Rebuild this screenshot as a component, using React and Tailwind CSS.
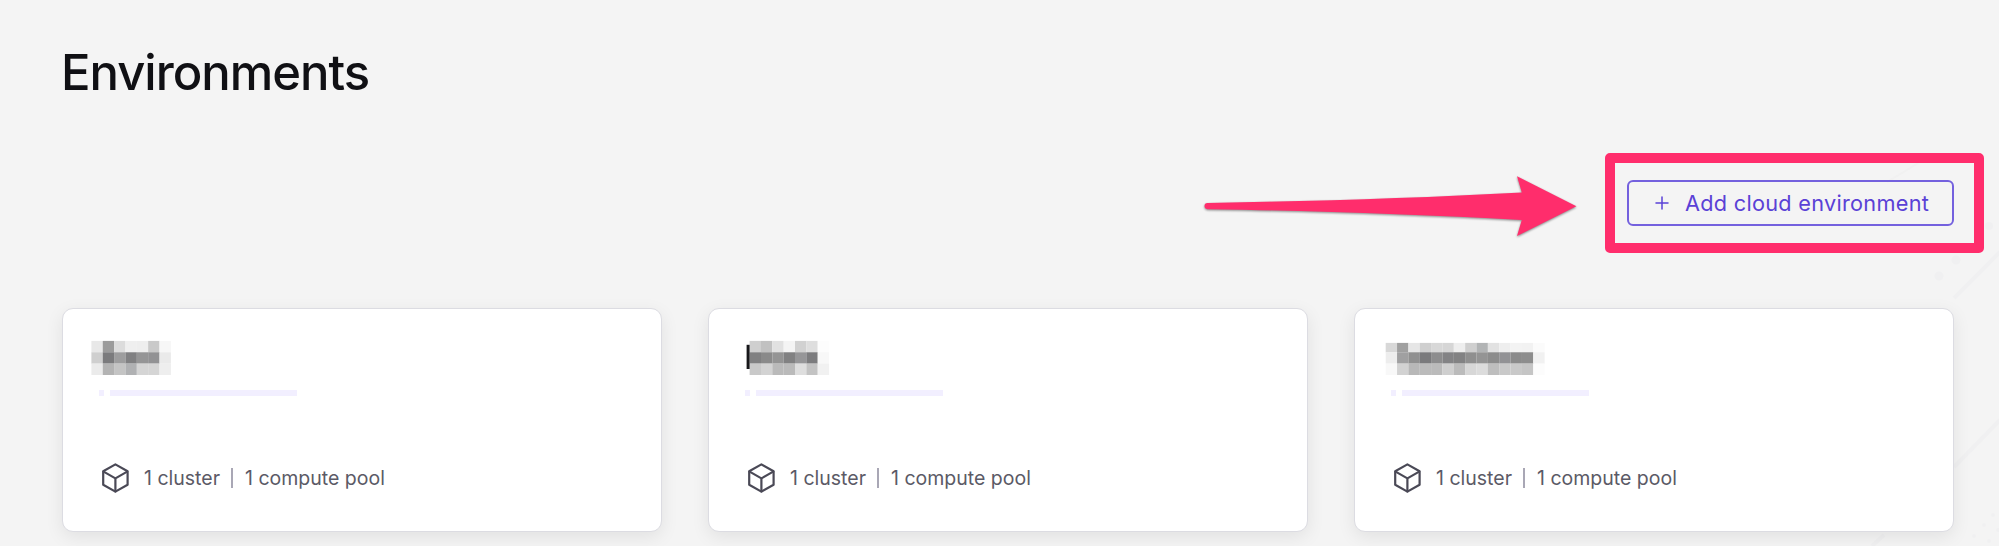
const environments = [
  {
    left: 28.4,
    rows: [
      ['#e8e8e8', '#9b9b9b', '#dcdcdc', '#efefef', '#eeeeee', '#c9c9c9', '#f7f7f7'],
      ['#cfcfcf', '#7b7b7d', '#9d9d9e', '#808082', '#959596', '#929294', '#eaeaea'],
      ['#ebebeb', '#b3b3b3', '#c4c4c4', '#b0b1b3', '#d5d5d5', '#d5d5d5', '#eeeeee'],
    ],
    caret: false,
    firstRowTop: 0,
  },
  {
    left: 40.6,
    rows: [
      ['#cfcfcf', '#c1c1c1', '#e1e1e1', '#f4f4f4', '#d1d1d1', '#dedede', '#fdfdfd'],
      ['#808081', '#8a8a8a', '#949494', '#818182', '#969698', '#7c7c7e', '#f8f8f8'],
      ['#c9c9c9', '#d3d3d3', '#bababa', '#bababa', '#dedede', '#c3c3c3', '#f1f1f1'],
    ],
    caret: true,
    firstRowTop: 0,
  },
  {
    left: 30.7,
    rows: [
      ['#d8d8d8', '#a0a0a0', '#e6e6e6', '#cfcfcf', '#d8d8d8', '#d6d6d6', '#eeeeee', '#cfcfcf', '#b2b4b5', '#e2e2e2', '#eeeeee', '#f3f3f3', '#f2f2f2', '#fbfbfb'],
      ['#ededed', '#a0a0a1', '#909090', '#7a7a7c', '#8d8d8e', '#838385', '#828283', '#8f8f8f', '#949494', '#8c8c8c', '#929295', '#8b8b8b', '#8d8d8d', '#f1f1f1'],
      ['#f8f8f8', '#d2d2d2', '#b8b8b8', '#bbbbbb', '#bbbbbb', '#cfcfcf', '#bbbbbb', '#d7d7d7', '#dcdcdc', '#bebebe', '#c9c9c9', '#c9c9c9', '#c5c5c5', '#fcfcfc'],
    ],
    caret: false,
    firstRowTop: 2,
  },
];

function RedactedName({ left, rows, caret, firstRowTop }) {
  const cell = 11.35;
  return (
    <svg className="block h-[36px] w-full" aria-hidden="true">
      {rows.map((row, r) =>
        row.map((fill, c) => {
          const trim = r === 0 ? firstRowTop : 0;
          return (
            <rect
              key={`${r}-${c}`}
              x={left + c * cell}
              y={0.9 + r * cell + trim}
              width={cell + 0.05}
              height={cell + 0.05 - trim}
              fill={fill}
            />
          );
        })
      )}
      {caret && <rect x="37.6" y="4.8" width="3" height="24.2" fill="#17171a" />}
    </svg>
  );
}

function CubeIcon() {
  return (
    <svg
      viewBox="0 0 28 32"
      className="h-8 w-7 shrink-0"
      fill="none"
      stroke="#4a4956"
      strokeWidth="2.2"
      strokeLinejoin="round"
      strokeLinecap="round"
    >
      <path d="M14.4 2.4 26.6 9.3v13.4L14.4 29.6 2.2 22.7V9.3Z" />
      <path d="M2.6 9.6 14.4 16.4l11.8-6.8M14.4 16.4v13" />
    </svg>
  );
}

function EnvironmentCard({ env }) {
  return (
    <article className="flex h-[224px] flex-col rounded-[11px] border border-[#dcdce2] bg-white pt-[31px] shadow-[0_5px_18px_rgba(0,0,0,0.08)]">
      <RedactedName {...env} />
      <div className="mt-[14px] flex h-[6px] gap-[6px] pl-[36px]">
        <span className="w-[5px] bg-[#f2efff]" />
        <span className="w-[187px] bg-[#f2efff]" />
      </div>
      <div className="mt-[66px] flex h-8 items-center pl-[38px] text-[19.5px] leading-8 text-[#5b5a66]">
        <CubeIcon />
        <span className="ml-[15px] w-[87px] whitespace-nowrap">1 cluster</span>
        <span className="h-5 w-[2px] bg-[#a9a7b5]" />
        <span className="ml-[12px] whitespace-nowrap">1 compute pool</span>
      </div>
    </article>
  );
}

function Backdrop() {
  return (
    <svg className="pointer-events-none absolute inset-0 h-full w-full" viewBox="0 0 1999 546" fill="none" aria-hidden="true">
      <g stroke="#f0f0f1" strokeWidth="4">
        <path d="M1954 298 2000 252" />
        <path d="M1954 467 2000 420" />
        <path d="M1872 546 1884 535" />
        <path d="M1887 182 1930 156" strokeWidth="2" stroke="#f1f1f1" />
      </g>
      <g fill="#f0f0f1">
        <circle cx="1956" cy="260" r="4.5" />
        <circle cx="1939" cy="276" r="4.5" />
        <circle cx="1989" cy="226" r="4" />
        <circle cx="1993" cy="515" r="2" />
        <circle cx="1984" cy="525" r="2" />
        <circle cx="1974" cy="536" r="2" />
        <circle cx="1989" cy="541" r="2" />
        <circle cx="1998" cy="530" r="2" />
      </g>
    </svg>
  );
}

function Arrow() {
  return (
    <svg
      viewBox="0 0 400 90"
      className="mr-[15px] h-[90px] w-[400px] shrink-0"
      style={{ filter: 'drop-shadow(0 1px 1px rgba(0,0,0,0.45))' }}
    >
      <path
        d="M17.5 43 C130 41 230 38 331.8 32.5 L327 16.3 386.4 46.3 327 76 331.8 60 C230 54.5 130 51 17.5 49.2 Q14.5 49 14.5 46.1 Q14.5 43.1 17.5 43Z"
        fill="#ff2d6c"
      />
    </svg>
  );
}

export default function App() {
  return (
    <main className="relative h-[546px] w-[1999px] overflow-hidden bg-[#f4f4f4] font-['Inter',sans-serif]">
      <Backdrop />
      <div className="relative flex flex-col">
        <h1 className="h-[153px] pl-[61px] pt-[43px] text-[49px] font-medium leading-[60px] tracking-[-1.02px] text-[#101014]">
          Environments
        </h1>
        <div className="flex h-[100px] justify-end pr-[15px]">
          <div className="pt-[7px]">
            <Arrow />
          </div>
          <div className="flex h-[100px] w-[379px] items-center rounded-[5px] border-[10px] border-[#ff2d6c] pl-[12px]">
            <button className="flex h-[46px] w-[327px] items-center whitespace-nowrap rounded-[6px] border-2 border-[#7461de] pl-[26px] text-[21.7px] leading-[28px] tracking-[0.28px] text-[#5a41d6]">
              <svg viewBox="0 0 14 14" className="mr-[16px] h-[14px] w-[14px]" stroke="currentColor" strokeWidth="1.5" strokeLinecap="round">
                <path d="M7 1v12M1 7h12" />
              </svg>
              Add cloud environment
            </button>
          </div>
        </div>
        <section className="mt-[55px] grid grid-cols-3 gap-[46px] pl-[62px] pr-[45px]">
          {environments.map((env, i) => (
            <EnvironmentCard key={i} env={env} />
          ))}
        </section>
      </div>
    </main>
  );
}
